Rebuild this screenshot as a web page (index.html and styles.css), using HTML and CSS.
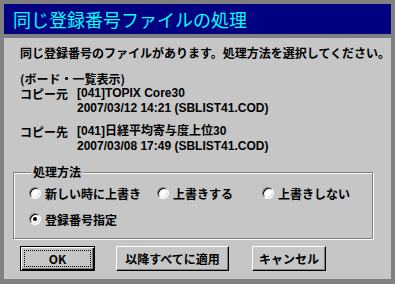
FILE: index.html
```html
<!DOCTYPE html>
<html>
    <head>
        <meta charset="UTF-8"/>
        <title>同じ登録番号ファイルの処理</title>
        <link rel="stylesheet" href="styles.css">
    </head>
    <body>
        <div class="window">
            <div class="titlebar">同じ登録番号ファイルの処理</div>
            <div class="client">
                <p class="message">同じ登録番号のファイルがあります。処理方法を選択してください。</p>
                <p class="mode">(ボード・一覧表示)</p>
                <div class="info">
                    <span class="label">コピー元</span>
                    <span class="value">[041]TOPIX Core30</span>
                    <span></span>
                    <span class="value">2007/03/12 14:21 (SBLIST41.COD)</span>
                </div>
                <div class="info second">
                    <span class="label">コピー先</span>
                    <span class="value">[041]日経平均寄与度上位30</span>
                    <span></span>
                    <span class="value">2007/03/08 17:49 (SBLIST41.COD)</span>
                </div>
                <fieldset class="group">
                    <legend>処理方法</legend>
                    <div class="options">
                        <label class="radio"><span class="dot"></span>新しい時に上書き</label>
                        <label class="radio"><span class="dot"></span>上書きする</label>
                        <label class="radio"><span class="dot"></span>上書きしない</label>
                        <label class="radio"><span class="dot checked"></span>登録番号指定</label>
                    </div>
                </fieldset>
                <div class="buttons">
                    <button class="btn default"><span class="focus">OK</span></button>
                    <button class="btn wide">以降すべてに適用</button>
                    <button class="btn">キャンセル</button>
                </div>
            </div>
        </div>
    </body>
</html>
```

FILE: styles.css
```css
html, body {
    margin: 0;
    padding: 0;
}

body {
    background: #808080;
    width: 395px;
    height: 284px;
    overflow: hidden;
    font-family: "Noto Sans CJK JP", "DejaVu Sans", sans-serif;
    font-size: 12px;
    font-weight: bold;
    color: #000;
}

.window {
    padding: 4px 4px 5px 4px;
}

.titlebar {
    height: 30px;
    line-height: 30px;
    background: #000080;
    color: #00ffff;
    font-size: 18px;
    font-weight: normal;
    padding-left: 9px;
    margin-bottom: 4px;
}

.client {
    background: #c6c6c6;
    height: 241px;
    padding: 0 0 0 16px;
    box-sizing: border-box;
    overflow: hidden;
}

p {
    margin: 0;
    line-height: 15px;
}

.message {
    padding-top: 7px;
}

.mode {
    margin-top: 11px;
}

.info {
    display: grid;
    grid-template-columns: 57px auto;
    line-height: 15px;
}

.info .value {
    font-family: "Liberation Sans", "Noto Sans CJK JP", sans-serif;
}

.info.second {
    margin-top: 8px;
}

.group {
    margin: 11px 0 0 -7px;
    width: 360px;
    height: 74px;
    box-sizing: border-box;
    padding: 6px 0 10px 15px;
    border: 1px solid #808080;
    box-shadow: inset 1px 1px 0 #fff, 1px 1px 0 #fff;
}

.group legend {
    padding: 0 2px;
    margin-left: 2px;
    line-height: 14px;
    background: #c6c6c6;
}

.options {
    display: grid;
    grid-template-columns: 128px 105px auto;
    row-gap: 10px;
}

.radio {
    display: flex;
    align-items: center;
    gap: 4px;
    height: 16px;
}

.dot {
    width: 12px;
    height: 12px;
    box-sizing: border-box;
    border-radius: 50%;
    background: #fff;
    border: 1px solid;
    border-color: #808080 #fff #fff #808080;
    box-shadow: inset 1px 1px 0 #000, inset -1px -1px 0 #dcdcdc;
    position: relative;
}

.dot.checked::after {
    content: "";
    position: absolute;
    left: 3px;
    top: 3px;
    width: 4px;
    height: 4px;
    border-radius: 50%;
    background: #000;
}

.buttons {
    display: flex;
    margin-top: 7px;
    gap: 21px;
}

.btn {
    font-family: inherit;
    font-size: 12px;
    font-weight: bold;
    color: #000;
    background: #c6c6c6;
    height: 25px;
    width: 74px;
    padding: 0;
    border: 1px solid;
    border-color: #fff #000 #000 #fff;
    box-shadow: inset -1px -1px 0 #808080;
}

.btn.wide {
    width: 113px;
    margin-right: 2px;
}

.btn.default {
    width: 75px;
    border: 1px solid #000;
    box-shadow: inset 1px 1px 0 #fff, inset -1px -1px 0 #000, inset -2px -2px 0 #808080;
    display: flex;
    padding: 3px;
}

.focus {
    flex: 1;
    border: 1px dotted #000;
    line-height: 15px;
}
```
